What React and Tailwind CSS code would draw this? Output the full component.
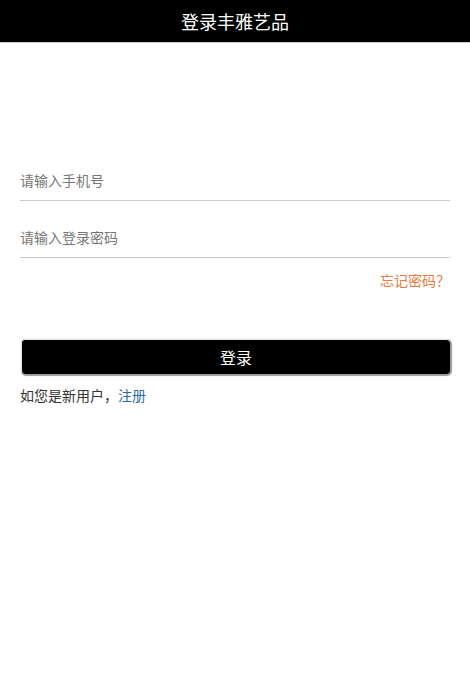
export default function App() {
  return (
    <div className="min-h-[682px] bg-white" style={{ fontFamily: '"Microsoft YaHei", "Noto Sans CJK SC", sans-serif' }}>
      <header className="h-[43px] bg-black border-b border-[#ccc] flex items-center justify-center">
        <h1 className="text-[18px] text-white leading-none">登录丰雅艺品</h1>
      </header>

      <form className="px-5 pt-[123px]">
        <div className="border-b border-[#ccc] pb-[6px]">
          <input
            type="text"
            placeholder="请输入手机号"
            className="w-full h-[28px] text-[14px] text-[#333] placeholder:text-[#777] outline-none bg-transparent"
          />
        </div>
        <div className="border-b border-[#ccc] pb-[6px] mt-[22px]">
          <input
            type="password"
            placeholder="请输入登录密码"
            className="w-full h-[28px] text-[14px] text-[#333] placeholder:text-[#777] outline-none bg-transparent"
          />
        </div>
        <div className="flex justify-end mt-[12px]">
          <a className="text-[14px] text-[#e8793e] leading-[20px]">忘记密码？</a>
        </div>

        <button
          type="button"
          className="mt-[49px] ml-[1px] w-[429px] h-[35px] bg-black text-white text-[16px] rounded-[4px] border-t border-l border-[#e6e6e6] shadow-[1px_1px_1px_1px_#999]"
        >
          登录
        </button>

        <p className="mt-[11px] text-[14px] text-[#333] leading-[20px]">
          如您是新用户，<a className="text-[#2b6ca3]">注册</a>
        </p>
      </form>
    </div>
  );
}
